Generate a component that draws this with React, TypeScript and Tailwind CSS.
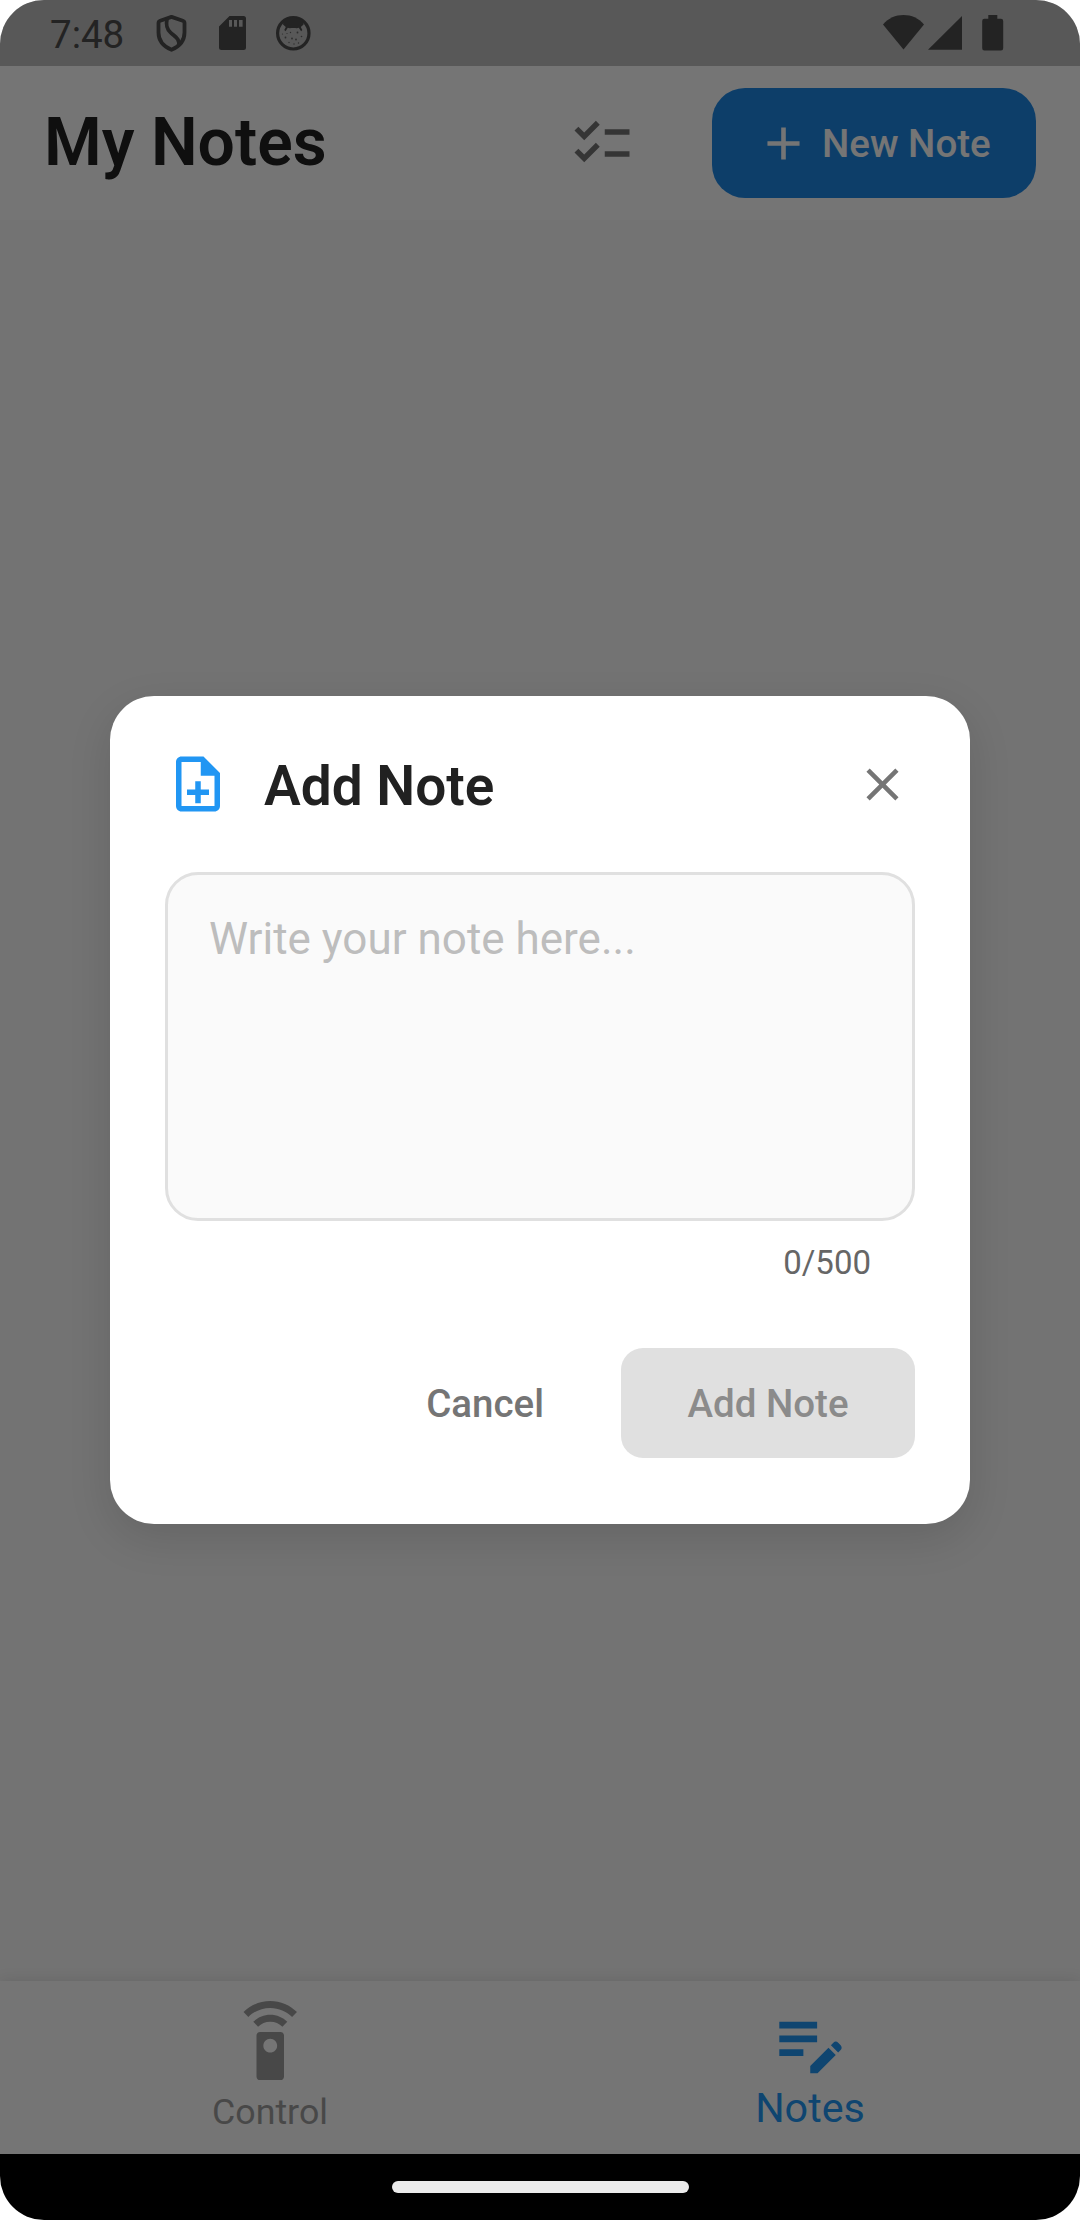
import type { ReactNode } from 'react';

function Icon({ d, className }: { d: string; className: string }) {
  return (
    <svg viewBox="0 0 24 24" fill="currentColor" className={`shrink-0 ${className}`}>
      <path d={d} />
    </svg>
  );
}

const CHECKLIST =
  'M22 7h-9v2h9V7zm0 8h-9v2h9v-2zM5.54 11 2 7.46l1.41-1.41 2.12 2.12 4.24-4.24 1.41 1.41L5.54 11zm0 8L2 15.46l1.41-1.41 2.12 2.12 4.24-4.24 1.41 1.41L5.54 19z';
const ADD = 'M19 13h-6v6h-2v-6H5v-2h6V5h2v6h6v2z';
const NOTE_ADD =
  'M13 11h-2v3H8v2h3v3h2v-3h3v-2h-3v-3zm1-9H6c-1.1 0-2 .9-2 2v16c0 1.1.89 2 1.99 2H18c1.1 0 2-.9 2-2V8l-6-6zm4 18H6V4h7v5h5v11z';
const CLOSE =
  'M19 6.41 17.59 5 12 10.59 6.41 5 5 6.41 10.59 12 5 17.59 6.41 19 12 13.41 17.59 19 19 17.59 13.41 12 19 6.41z';
const REMOTE =
  'M15 9H9c-.55 0-1 .45-1 1v12c0 .55.45 1 1 1h6c.55 0 1-.45 1-1V10c0-.55-.45-1-1-1zm-3 6c-1.1 0-2-.9-2-2s.9-2 2-2 2 .9 2 2-.9 2-2 2zM7.05 6.05l1.41 1.41C9.37 6.56 10.62 6 12 6s2.63.56 3.54 1.46l1.41-1.41C15.68 4.78 13.93 4 12 4s-3.68.78-4.95 2.05zM12 0C8.96 0 6.21 1.23 4.22 3.22l1.41 1.41C7.26 3.01 9.51 2 12 2s4.74 1.01 6.36 2.64l1.41-1.41C17.79 1.23 15.04 0 12 0z';
const EDIT_NOTE =
  'M3 10h11v2H3v-2zm0-2h11V6H3v2zm0 8h7v-2H3v2zm15.01-3.13.71-.71a.996.996 0 0 1 1.41 0l.71.71c.39.39.39 1.02 0 1.41l-.71.71-2.12-2.12zm-.71.71-5.3 5.3V21h2.12l5.3-5.3-2.12-2.12z';

function StatusBar() {
  return (
    <div className="flex h-[66px] items-start bg-[#bfbfbf] pl-[50px] pr-[76px] text-[#4c4c4c]">
      <span className="w-[105px] pt-[12px] text-[38.5px] leading-[45px]">7:48</span>
      <svg viewBox="0 0 33 40" className="mt-[14px] h-10 w-[33px]" fill="none" stroke="currentColor" strokeWidth="3.8">
        <path
          d="M16.500 2.900 5.200 6.700Q3.500 7.300 3.500 9v9.600c0 7.800 5 14 13 17.200 8-3.200 13-9.400 13-17.200V9q0-1.700-1.700-2.300L16.500 2.900z"
          strokeLinejoin="round"
        />
        <path d="M12 5c-1.200 6-.6 9.500 3.500 13.500 4 4 10 6.500 8 13" />
      </svg>
      <svg viewBox="0 0 27 34" className="ml-[31px] mt-4 h-[34px] w-[27px]" fill="currentColor">
        <path
          fillRule="evenodd"
          d="M10.500 0H24.500a2.500 2.500 0 0 1 2.500 2.500v29a2.500 2.500 0 0 1-2.500 2.500H2.500a2.500 2.500 0 0 1-2.500-2.500V10.500L10.500 0zM10 4v6.700h3V4h-3zm5 0v6.700h3V4h-3zm5 0v6.700h3.600V4H20z"
        />
      </svg>
      <svg viewBox="0 0 36 36" className="ml-[29px] mt-[15px] h-9 w-9" fill="currentColor">
        <circle cx="18.300" cy="18.300" r="15.700" fill="none" stroke="currentColor" strokeWidth="3.200" />
        <path d="M8.500 6.500C11 3.500 15 2.500 18.300 2.500s7.300 1 9.800 4l.5 3-2.800 2.500 1.500 3-1.200 1.200-2.300-3.400c-1.600.8-3.200.2-5.500.2s-3.900.6-5.500-.2l-2.300 3.400-1.200-1.200 1.500-3L8 9.500l.5-3z" />
        <g opacity=".8">
          <circle cx="10.500" cy="22.500" r=".9" />
          <circle cx="15.500" cy="17.500" r=".7" />
          <circle cx="17" cy="23.500" r=".9" />
          <circle cx="22.500" cy="17.500" r=".9" />
          <circle cx="21" cy="24.500" r=".9" />
          <circle cx="26.500" cy="21.500" r=".8" />
          <circle cx="14" cy="27.500" r=".7" />
          <circle cx="19" cy="29" r=".7" />
          <circle cx="12" cy="18.500" r=".6" />
          <circle cx="23.500" cy="28" r=".7" />
          <circle cx="7.500" cy="19" r=".6" />
        </g>
      </svg>
      <svg viewBox="0 0 121 36" className="ml-auto mt-[15px] h-9 w-[121px]" fill="currentColor">
        <path d="M0 9.500C5.500 3 12.500 0 20.500 0S35.500 3 41 9.500L20.500 34.500 0 9.500z" />
        <path d="M79 1v33.800H45L79 1z" />
        <path d="M105.300 0h9v3.800h3.700a2.200 2.200 0 0 1 2.200 2.200v27.300a2.200 2.200 0 0 1-2.200 2.200h-16.600a2.200 2.200 0 0 1-2.200-2.200V6a2.200 2.200 0 0 1 2.200-2.200h3.900V0z" />
      </svg>
    </div>
  );
}

function AppBar() {
  return (
    <header className="flex h-[154px] items-center bg-white pl-11 pr-11">
      <h1 className="pb-[2px] text-[66px] font-semibold leading-[77px] text-[#212121]">My Notes</h1>
      <button className="ml-auto mr-[77px] text-[#757575]">
        <Icon d={CHECKLIST} className="size-[66px]" />
      </button>
      <button className="flex h-[110px] w-[324px] items-center gap-[11px] rounded-[33px] bg-[#1e88e5] pl-11 text-white">
        <Icon d={ADD} className="size-[55px]" />
        <span className="pt-px text-[38.5px] font-medium leading-[46px]">New Note</span>
      </button>
    </header>
  );
}

function Tab({ icon, className, children }: { icon: string; className: string; children: ReactNode }) {
  return (
    <button className={`flex flex-1 flex-col items-center pt-5 ${className}`}>
      <Icon d={icon} className="size-[82.5px]" />
      {children}
    </button>
  );
}

function NoteDialog() {
  return (
    <section className="flex h-[828px] w-[860px] flex-col rounded-[44px] bg-white px-[55px] pt-[55px] shadow-[0_14px_44px_rgba(0,0,0,0.12)]">
      <div className="flex h-[66px] items-center">
        <Icon d={NOTE_ADD} className="size-[66px] text-[#2196f3]" />
        <h2 className="ml-[33px] pt-[3px] text-[55px] font-semibold leading-[66px] text-[#212121]">Add Note</h2>
        <button className="ml-auto mr-[5px] text-[#757575]">
          <Icon d={CLOSE} className="size-[55px]" />
        </button>
      </div>
      <textarea
        placeholder="Write your note here..."
        className="mt-[55px] block h-[349px] w-full resize-none rounded-[33px] border-[3px] border-[#e0e0e0] bg-[#fafafa] px-[41px] pt-[38px] text-[44px] leading-[52px] outline-none placeholder:text-[#bdbdbd]"
      />
      <div className="mt-[22px] pr-11 text-right text-[33px] leading-[39px] text-[#666666]">0/500</div>
      <div className="mt-[66px] flex h-[110px] items-center justify-end gap-[77px] text-[38.5px] font-medium leading-[46px]">
        <button className="pt-px text-[#757575]">Cancel</button>
        <button className="h-[110px] w-[294px] rounded-[22px] bg-[#e0e0e0] pt-px text-[#8b8b8b]">Add Note</button>
      </div>
    </section>
  );
}

export default function App() {
  return (
    <div className="bg-white">
      <div className="relative flex h-[2220px] w-[1080px] flex-col overflow-hidden rounded-[44px] bg-[#fafafa] font-[Roboto,sans-serif]">
        <StatusBar />
        <AppBar />
        <main className="flex-1" />
        <nav className="flex h-[173px] bg-white shadow-[0_0_14px_rgba(0,0,0,0.12)]">
          <Tab icon={REMOTE} className="text-[#9e9e9e]">
            <span className="mt-[7px] text-[35.75px] leading-[42px]">Control</span>
          </Tab>
          <Tab icon={EDIT_NOTE} className="text-[#2196f3]">
            <span className="text-[41.25px] leading-[48px]">Notes</span>
          </Tab>
        </nav>
        <div className="relative z-20 flex h-[66px] justify-center bg-black pt-[27px]">
          <div className="h-3 w-[297px] rounded-full bg-[#ebebeb]" />
        </div>
        <div className="absolute inset-x-0 top-0 z-10 flex h-[2154px] items-center justify-center bg-black/54 pt-[66px]">
          <NoteDialog />
        </div>
      </div>
    </div>
  );
}
